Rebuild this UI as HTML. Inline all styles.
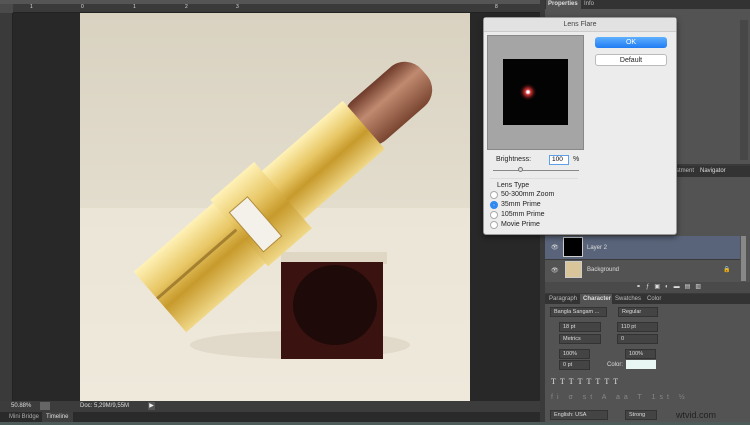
<!DOCTYPE html><html><head><style>
*{margin:0;padding:0;box-sizing:border-box}
body{width:750px;height:425px;overflow:hidden;background:#282828;font-family:"Liberation Sans",sans-serif;position:relative}
.a{position:absolute}
.t{font-size:6px;color:#ddd;white-space:nowrap}
.f{background:#444;border:1px solid #333;color:#ddd;font-size:5.5px;padding-left:3px;line-height:8px}
.dt{font-size:7px;color:#222;white-space:nowrap}
.rb{width:8px;height:8px;border-radius:50%;background:#fff;border:1px solid #aaa}
</style></head><body>
<div class="a" style="left:0;top:0;width:545px;height:4px;background:#555"></div>
<div class="a" style="left:0;top:4px;width:545px;height:9px;background:#3a3a3a;border-bottom:1px solid #222"></div>
<div class="a t" style="left:30px;top:4px;font-size:5px">1</div>
<div class="a t" style="left:81px;top:4px;font-size:5px">0</div>
<div class="a t" style="left:133px;top:4px;font-size:5px">1</div>
<div class="a t" style="left:185px;top:4px;font-size:5px">2</div>
<div class="a t" style="left:236px;top:4px;font-size:5px">3</div>
<div class="a t" style="left:495px;top:4px;font-size:5px">8</div>
<div class="a" style="left:0;top:13px;width:13px;height:388px;background:#3a3a3a;border-right:1px solid #222"></div>
<div class="a" style="left:0;top:4px;width:13px;height:9px;background:#4a4a4a"></div>
<svg class="a" style="left:80px;top:13px" width="390" height="388" viewBox="80 13 390 388">
<defs>
<linearGradient id="bg" x1="0" y1="0" x2="0" y2="1"><stop offset="0" stop-color="#d9d2c1"/><stop offset="1" stop-color="#e3ddce"/></linearGradient>
<linearGradient id="tb" x1="0" y1="0" x2="0" y2="1"><stop offset="0" stop-color="#ebe5d7"/><stop offset="1" stop-color="#efe9dc"/></linearGradient>
<linearGradient id="gold" x1="0" y1="0" x2="0" y2="1"><stop offset="0" stop-color="#fff2b8"/><stop offset=".35" stop-color="#e8c766"/><stop offset=".6" stop-color="#c79a2c"/><stop offset="1" stop-color="#f0d888"/></linearGradient>
<linearGradient id="lip" x1="0" y1="0" x2="0" y2="1"><stop offset="0" stop-color="#6e3a2a"/><stop offset=".4" stop-color="#c08a70"/><stop offset="1" stop-color="#7a4530"/></linearGradient>
</defs>
<rect x="80" y="13" width="390" height="195" fill="url(#bg)"/>
<rect x="80" y="208" width="390" height="193" fill="url(#tb)"/>
<ellipse cx="300" cy="345" rx="110" ry="14" fill="#d9cfbe" opacity=".6"/>
<rect x="281" y="252" width="106" height="12" fill="#e0d6c4"/>
<rect x="281" y="262" width="102" height="97" fill="#3a1210"/>
<ellipse cx="335" cy="305" rx="42" ry="40" fill="#1e0a08"/>
<g transform="translate(160,302) rotate(-41)">
<rect x="0" y="-40" width="120" height="80" fill="url(#gold)"/>
<rect x="255" y="-26" width="95" height="52" rx="22" fill="url(#lip)"/>
<rect x="150" y="-32" width="120" height="64" fill="url(#gold)"/>
<rect x="105" y="-44" width="58" height="88" fill="url(#gold)"/>
<rect x="111" y="-22" width="24" height="52" fill="#f4f1ea" stroke="#b08b3a"/>
<rect x="0" y="-6" width="105" height="3" fill="#6b4a10" opacity=".5"/>
</g>
</svg>
<div class="a" style="left:0;top:401px;width:545px;height:11px;background:#3c3c3c"></div>
<div class="a t" style="left:11px;top:403px">50.88%</div>
<div class="a" style="left:40px;top:402px;width:10px;height:8px;background:#666"></div>
<div class="a t" style="left:80px;top:403px">Doc: 5,29M/9,55M</div>
<div class="a" style="left:148px;top:402px;width:7px;height:8px;background:#555;color:#eee;font-size:6px;text-align:center">▶</div>
<div class="a" style="left:0;top:412px;width:545px;height:10px;background:#2a2a2a"></div>
<div class="a t" style="left:9px;top:414px;color:#aaa">Mini Bridge</div>
<div class="a" style="left:42px;top:412px;width:31px;height:10px;background:#3e3e3e"></div>
<div class="a t" style="left:46px;top:414px">Timeline</div>
<div class="a" style="left:0;top:422px;width:750px;height:3px;background:#4d5c58"></div>
<div class="a" style="left:540px;top:0;width:210px;height:422px;background:#3a3a3a"></div>
<div class="a" style="left:545px;top:0;width:205px;height:9px;background:#333"></div>
<div class="a" style="left:546px;top:0;width:35px;height:9px;background:#535353"></div>
<div class="a t" style="left:548px;top:1px;font-weight:bold">Properties</div>
<div class="a t" style="left:584px;top:1px;color:#bbb">Info</div>
<div class="a" style="left:545px;top:9px;width:205px;height:155px;background:#535353"></div>
<div class="a" style="left:740px;top:20px;width:8px;height:140px;background:#474747"></div>
<div class="a" style="left:545px;top:166px;width:205px;height:11px;background:#333"></div>
<div class="a t" style="left:676px;top:168px;color:#bbb">stment</div>
<div class="a t" style="left:700px;top:168px">Navigator</div>
<div class="a" style="left:545px;top:177px;width:205px;height:105px;background:#535353"></div>
<div class="a" style="left:545px;top:236px;width:195px;height:23px;background:#59647a"></div>
<div class="a" style="left:563px;top:237px;width:20px;height:20px;background:#000;border:1px solid #ccc"></div>
<div class="a t" style="left:587px;top:245px">Layer 2</div>
<div class="a t" style="left:551px;top:244px">👁</div>
<div class="a" style="left:545px;top:259px;width:195px;height:1px;background:#3a3a3a"></div>
<div class="a" style="left:565px;top:261px;width:17px;height:17px;background:#d9c59a;border:1px solid #ccc"></div>
<div class="a t" style="left:587px;top:267px">Background</div>
<div class="a t" style="left:551px;top:267px">👁</div>
<div class="a t" style="left:723px;top:266px">🔒</div>
<div class="a" style="left:741px;top:236px;width:5px;height:45px;background:#888"></div>
<div class="a" style="left:545px;top:282px;width:205px;height:11px;background:#4a4a4a"></div>
<div class="a t" style="left:636px;top:283px;letter-spacing:5px">⚭ƒ▣◐▬▤▥</div>
<div class="a" style="left:545px;top:294px;width:205px;height:10px;background:#333"></div>
<div class="a" style="left:580px;top:294px;width:32px;height:10px;background:#535353"></div>
<div class="a t" style="left:549px;top:296px;color:#bbb">Paragraph</div>
<div class="a t" style="left:583px;top:296px;font-weight:bold">Character</div>
<div class="a t" style="left:615px;top:296px;color:#bbb">Swatches</div>
<div class="a t" style="left:647px;top:296px;color:#bbb">Color</div>
<div class="a" style="left:545px;top:304px;width:205px;height:104px;background:#535353"></div>
<div class="a f" style="left:550px;top:307px;width:57px;height:10px">Bangla Sangam ...</div>
<div class="a f" style="left:618px;top:307px;width:40px;height:10px">Regular</div>
<div class="a f" style="left:559px;top:322px;width:42px;height:10px">18 pt</div>
<div class="a f" style="left:617px;top:322px;width:41px;height:10px">110 pt</div>
<div class="a f" style="left:559px;top:334px;width:42px;height:10px">Metrics</div>
<div class="a f" style="left:617px;top:334px;width:41px;height:10px">0</div>
<div class="a f" style="left:559px;top:349px;width:31px;height:10px">100%</div>
<div class="a f" style="left:625px;top:349px;width:31px;height:10px">100%</div>
<div class="a f" style="left:559px;top:360px;width:31px;height:10px">0 pt</div>
<div class="a t" style="left:607px;top:362px">Color:</div>
<div class="a" style="left:626px;top:360px;width:30px;height:9px;background:#e8f6f4"></div>
<div class="a t" style="left:551px;top:377px;font-size:8px;font-family:'Liberation Serif',serif;letter-spacing:4px">TTTTTTTT</div>
<div class="a t" style="left:551px;top:394px;font-size:7px;color:#888;letter-spacing:4px">fi σ st A aa T 1st ½</div>
<div class="a" style="left:545px;top:408px;width:205px;height:14px;background:#535353"></div>
<div class="a f" style="left:550px;top:410px;width:58px;height:10px">English: USA</div>
<div class="a f" style="left:625px;top:410px;width:32px;height:10px">Strong</div>
<div class="a" style="left:676px;top:410px;font-size:9px;color:#222">wtvid.com</div>
<div class="a" style="left:483px;top:17px;width:194px;height:218px;background:#ececec;border:1px solid #999;border-radius:3px;box-shadow:0 2px 6px rgba(0,0,0,.5)"></div>
<div class="a" style="left:484px;top:18px;width:192px;height:14px;background:#e2e2e2;border-bottom:1px solid #ccc;text-align:center;font-size:7px;color:#444;line-height:13px">Lens Flare</div>
<div class="a" style="left:487px;top:35px;width:97px;height:115px;background:#a5a5a5;border:1px solid #888"></div>
<div class="a" style="left:503px;top:59px;width:65px;height:66px;background:#030303"></div>
<div class="a" style="left:520px;top:84px;width:16px;height:16px;border-radius:50%;background:radial-gradient(circle,#fff 0,#fff 10%,#c33 25%,rgba(120,20,20,.4) 55%,transparent 75%)"></div>
<div class="a" style="left:595px;top:37px;width:72px;height:11px;border-radius:3px;background:linear-gradient(#5fb0ff,#1f7cf2);color:#fff;font-size:7px;text-align:center;line-height:11px">OK</div>
<div class="a" style="left:595px;top:54px;width:72px;height:12px;border-radius:3px;background:#fff;border:1px solid #bbb;font-size:7px;text-align:center;line-height:11px;color:#222">Default</div>
<div class="a dt" style="left:496px;top:156px">Brightness:</div>
<div class="a" style="left:549px;top:155px;width:20px;height:10px;background:#fff;border:1px solid #5ea0ea;font-size:6.5px;line-height:8px;padding-left:2px">100</div>
<div class="a dt" style="left:573px;top:156px">%</div>
<div class="a" style="left:493px;top:170px;width:86px;height:1px;background:#888"></div>
<div class="a" style="left:518px;top:167px;width:5px;height:5px;background:#ddd;border:1px solid #777;border-radius:50%"></div>
<div class="a" style="left:490px;top:178px;width:88px;height:1px;background:#ddd"></div>
<div class="a dt" style="left:497px;top:182px">Lens Type</div>
<div class="a rb" style="left:490px;top:191px"></div><div class="a dt" style="left:501px;top:191px">50-300mm Zoom</div>
<div class="a rb" style="left:490px;top:201px;background:#2b86f0;border-color:#2b86f0;box-shadow:inset 0 0 0 2.5px #2b86f0,inset 0 0 0 4px #fff"></div><div class="a dt" style="left:501px;top:201px">35mm Prime</div>
<div class="a rb" style="left:490px;top:211px"></div><div class="a dt" style="left:501px;top:211px">105mm Prime</div>
<div class="a rb" style="left:490px;top:221px"></div><div class="a dt" style="left:501px;top:221px">Movie Prime</div>
</body></html>
